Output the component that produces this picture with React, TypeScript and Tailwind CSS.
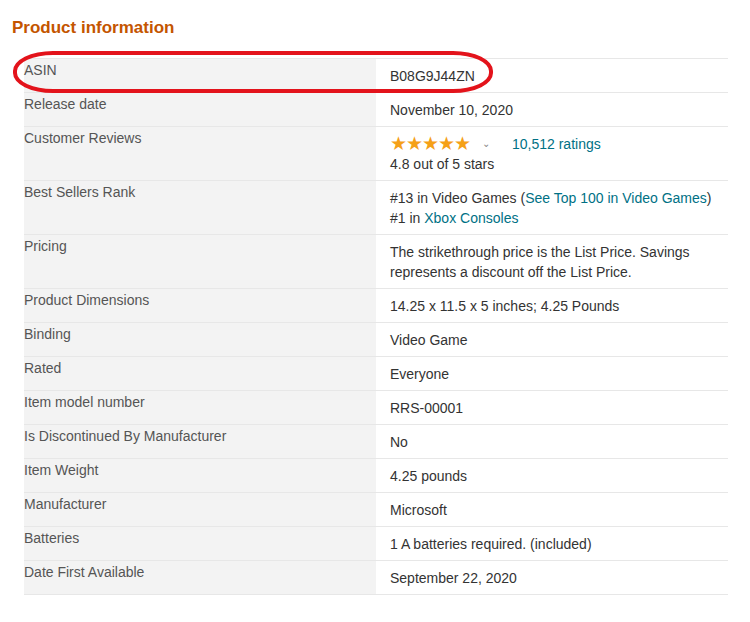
export default function App() {
  const rows: [string, React.ReactNode][] = [
    ['ASIN', 'B08G9J44ZN'],
    ['Release date', 'November 10, 2020'],
    [
      'Customer Reviews',
      <>
        <div className="flex items-center">
          <span className="text-[#f5a017] text-[19px] leading-5 tracking-[-1px]">★★★★★</span>
          <span className="ml-3 text-[10px] text-[#888]">⌄</span>
          <span className="ml-[22px] text-[#007185]">10,512 ratings</span>
        </div>
        <div>4.8 out of 5 stars</div>
      </>,
    ],
    [
      'Best Sellers Rank',
      <>
        <div>
          #13 in Video Games (<span className="text-[#007185]">See Top 100 in Video Games</span>)
        </div>
        <div>
          #1 in <span className="text-[#007185]">Xbox Consoles</span>
        </div>
      </>,
    ],
    ['Pricing', 'The strikethrough price is the List Price. Savings represents a discount off the List Price.'],
    ['Product Dimensions', '14.25 x 11.5 x 5 inches; 4.25 Pounds'],
    ['Binding', 'Video Game'],
    ['Rated', 'Everyone'],
    ['Item model number', 'RRS-00001'],
    ['Is Discontinued By Manufacturer', 'No'],
    ['Item Weight', '4.25 pounds'],
    ['Manufacturer', 'Microsoft'],
    ['Batteries', '1 A batteries required. (included)'],
    ['Date First Available', 'September 22, 2020'],
  ];

  return (
    <div className="relative w-[750px] h-[622px] bg-white" style={{ fontFamily: '"Liberation Sans", Arial, sans-serif' }}>
      <h2 className="pl-3 pt-[15px] h-[58px] text-[17px] font-bold text-[#c45500]">Product information</h2>
      <div className="ml-6 w-[704px] border-t border-[#e7e7e7]">
        {rows.map(([label, value]) => (
          <div key={label} className="grid grid-cols-[352px_352px] border-b border-[#e7e7e7]">
            <div className="bg-[#f3f3f3] pt-[1px] text-[14px] leading-5 text-[#555]">{label}</div>
            <div className="pl-[14px] pr-2 pt-[7px] pb-[6px] text-[14px] leading-5 text-[#333]">{value}</div>
          </div>
        ))}
      </div>
      <div className="absolute left-[13px] top-[51px] w-[480px] h-[42px] border-4 border-[#e3131b] rounded-[40px/20px]" />
    </div>
  );
}
